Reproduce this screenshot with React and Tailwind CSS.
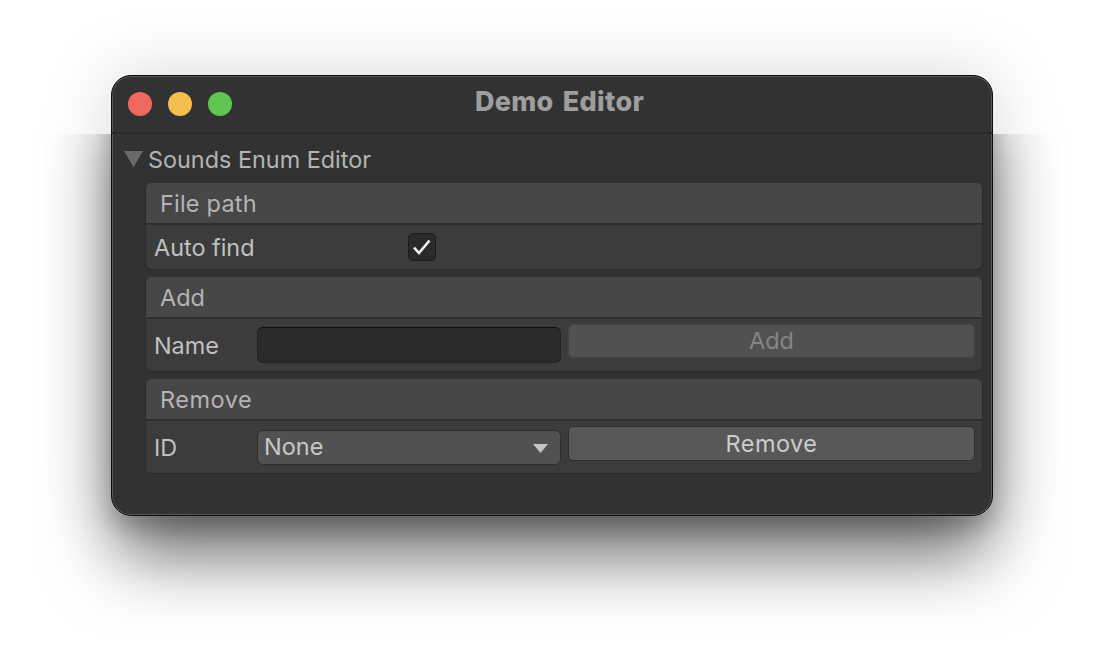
import React from "react";

const font = { fontFamily: "Inter, 'Liberation Sans', sans-serif" };

function Panel({ title, children, bodyClass, titleClass }) {
  return (
    <div className="w-[838px] rounded-[6px] border-b border-x border-[#2b2b2b] border-t-[1px] border-t-[#333333] bg-[#3c3c3c] overflow-hidden">
      <div className="h-[40px] bg-[#474747] pl-[14px] flex items-center text-[23.5px] text-[#b4b4b4]">
        <span className={titleClass}>{title}</span>
      </div>
      <div className="h-[2px] bg-[#2f2f2f]" />
      <div className={bodyClass}>{children}</div>
    </div>
  );
}

export default function App() {
  return (
    <div className="relative w-[1104px] h-[653px] bg-white overflow-hidden pt-[75px] pl-[111px]" style={font}>
      {/* soft glow, then the heavy shadow that only starts under the title bar */}
      <div className="absolute left-[111px] top-[75px] w-[882px] h-[441px] rounded-[20px] shadow-[0_0_70px_rgba(0,0,0,0.16)]" />
      <div className="absolute left-0 top-[134px] w-[1104px] h-[519px] overflow-hidden">
        <div className="absolute left-[111px] top-[-59px] w-[882px] h-[441px] rounded-[20px] shadow-[0_46px_70px_-6px_rgba(0,0,0,0.55),0_12px_22px_rgba(0,0,0,0.2)]" />
      </div>

      <div className="relative w-[882px] h-[441px] rounded-[20px] bg-[#323232] border border-[#0c0c0c] shadow-[inset_0_0_0_1px_#565656] overflow-hidden flex flex-col">
        <div className="h-[58px] shrink-0 border-b-2 border-[#2b2b2b] relative flex items-center justify-center">
          <div className="absolute left-[16px] top-[16px] flex gap-[16px]">
            <span className="w-[24px] h-[24px] rounded-full bg-[#ee6a5f]" />
            <span className="w-[24px] h-[24px] rounded-full bg-[#f5bf4f]" />
            <span className="w-[24px] h-[24px] rounded-full bg-[#61c554]" />
          </div>
          <span className="text-[27px] font-extrabold text-[#9e9e9e] mb-[4px] ml-[15px] tracking-[0.3px] [word-spacing:3px]">Demo Editor</span>
        </div>

        <div className="flex items-center h-[48px] shrink-0 pl-[12px]">
          <svg width="19" height="16" viewBox="0 0 19 16" className="shrink-0 mt-[2px]">
            <polygon points="0,0 19,0 9.5,16" fill="#6a6a6a" />
          </svg>
          <span className="ml-[5px] mt-[4px] text-[23.4px] text-[#b4b4b4]">Sounds Enum Editor</span>
        </div>

        <div className="pl-[33px] flex flex-col gap-[6px]">
          <Panel title="File path" titleClass="tracking-[0.2px] mt-[2px]" bodyClass="h-[44px] flex items-center pl-[8px]">
            <span className="w-[254px] mt-[2px] text-[23.4px] text-[#c0c0c0]">Auto find</span>
            <span className="w-[28px] h-[28px] rounded-[5px] bg-[#2a2a2a] border border-[#1c1c1c] flex items-center justify-center">
              <svg width="18" height="16" viewBox="0 0 18 16">
                <path d="M1 8.5 L6 14 L16.5 1.5" fill="none" stroke="#f0f0f0" strokeWidth="2.6" />
              </svg>
            </span>
          </Panel>

          <Panel title="Add" titleClass="mt-[2px]" bodyClass="h-[52px] flex pl-[8px] pr-[7px]">
            <span className="w-[103px] pt-[9px] text-[23.4px] text-[#c0c0c0]">Name</span>
            <span className="w-[304px] h-[36px] mt-[8px] rounded-[6px] bg-[#2a2a2a] border border-[#222222] border-t-[#101010]" />
            <button className="ml-[7px] w-[407px] h-[34px] mt-[5px] flex items-center justify-center rounded-[5px] bg-[#515151] border border-[#454545] text-[23.5px] leading-[28px] text-[#858585]">Add</button>
          </Panel>

          <Panel title="Remove" titleClass="tracking-[0.5px] mt-[2px]" bodyClass="h-[52px] flex pl-[8px] pr-[7px]">
            <span className="w-[103px] pt-[9px] text-[23.4px] text-[#c0c0c0]">ID</span>
            <span className="w-[304px] h-[35px] mt-[9px] pl-[6px] pr-[12px] rounded-[6px] bg-[#515151] border border-[#2e2e2e] flex items-center justify-between text-[23.5px] text-[#c8c8c8]">
              <span className="-mt-[1px]">None</span>
              <svg width="15" height="9" viewBox="0 0 15 9" className="mt-[2px]">
                <polygon points="0,0 15,0 7.5,9" fill="#c4c4c4" />
              </svg>
            </span>
            <button className="ml-[7px] w-[407px] h-[35px] mt-[5px] flex items-center justify-center rounded-[5px] bg-[#585858] border border-[#2e2e2e] text-[23.5px] leading-[28px] tracking-[0.5px] text-[#cccccc]">Remove</button>
          </Panel>
        </div>
      </div>
    </div>
  );
}
